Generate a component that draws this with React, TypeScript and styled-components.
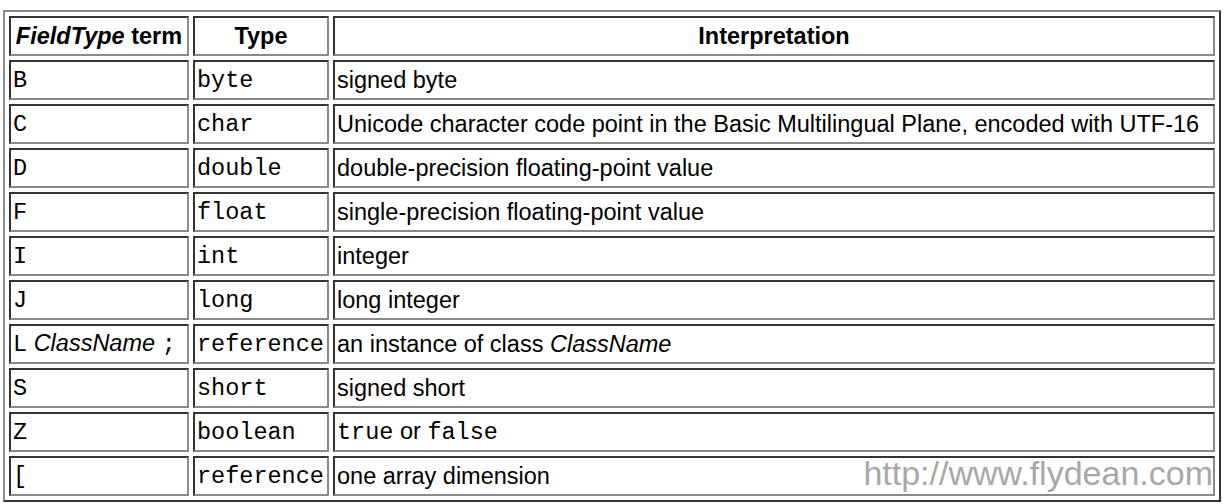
import React from "react";
import styled, { createGlobalStyle } from "styled-components";

const Global = createGlobalStyle`
  html, body { margin: 0; padding: 0; background: #fff; }
  body { font-family: "Liberation Sans", Arial, sans-serif; }
`;

const Page = styled.div`
  padding: 10px 3px 0 3px;
  position: relative;
`;

const Table = styled.table`
  width: 1218px;
  table-layout: fixed;
  border-collapse: separate;
  border-spacing: 4px;
  border-style: solid;
  border-width: 2px;
  border-color: #8a8a8a #333 #333 #8a8a8a;
  font-family: "Liberation Sans", Arial, sans-serif;
  font-size: 23.5px;
  color: #000;
`;

const Th = styled.th<{ $w?: number }>`
  ${(p) => (p.$w ? `width: ${p.$w}px;` : "")}
  height: 40px;
  box-sizing: border-box;
  border-style: solid;
  border-width: 2px;
  border-color: #333 #8a8a8a #8a8a8a #333;
  padding: 0 1px;
  font-size: 23.5px;
  font-weight: bold;
  text-align: center;
  vertical-align: middle;
  white-space: nowrap;
`;

const Td = styled.td`
  height: 40px;
  box-sizing: border-box;
  border-style: solid;
  border-width: 2px;
  border-color: #333 #8a8a8a #8a8a8a #333;
  padding: 0 2px;
  font-size: 23.5px;
  text-align: left;
  vertical-align: middle;
  white-space: nowrap;
`;

const Code = styled.code`
  font-family: "Liberation Mono", "Courier New", monospace;
  font-size: 23.5px;
`;

const Watermark = styled.div`
  position: absolute;
  right: 11px;
  bottom: 12px;
  font-family: "Liberation Sans", Arial, sans-serif;
  font-size: 34px;
  line-height: 1;
  color: #a8a8a8;
  pointer-events: none;
`;

type Row = { term: React.ReactNode; type: string; interp: React.ReactNode };

const rows: Row[] = [
  { term: <Code>B</Code>, type: "byte", interp: "signed byte" },
  {
    term: <Code>C</Code>,
    type: "char",
    interp: "Unicode character code point in the Basic Multilingual Plane, encoded with UTF-16",
  },
  { term: <Code>D</Code>, type: "double", interp: "double-precision floating-point value" },
  { term: <Code>F</Code>, type: "float", interp: "single-precision floating-point value" },
  { term: <Code>I</Code>, type: "int", interp: "integer" },
  { term: <Code>J</Code>, type: "long", interp: "long integer" },
  {
    term: (
      <>
        <Code>L</Code> <i>ClassName</i> <Code>;</Code>
      </>
    ),
    type: "reference",
    interp: (
      <>
        an instance of class <i>ClassName</i>
      </>
    ),
  },
  { term: <Code>S</Code>, type: "short", interp: "signed short" },
  {
    term: <Code>Z</Code>,
    type: "boolean",
    interp: (
      <>
        <Code>true</Code> or <Code>false</Code>
      </>
    ),
  },
  { term: <Code>[</Code>, type: "reference", interp: "one array dimension" },
];

export default function App() {
  return (
    <Page>
      <Global />
      <Table>
        <thead>
          <tr>
            <Th $w={180}>
              <i>FieldType</i> term
            </Th>
            <Th $w={136}>Type</Th>
            <Th>Interpretation</Th>
          </tr>
        </thead>
        <tbody>
          {rows.map((r, i) => (
            <tr key={i}>
              <Td>{r.term}</Td>
              <Td>
                <Code>{r.type}</Code>
              </Td>
              <Td>{r.interp}</Td>
            </tr>
          ))}
        </tbody>
      </Table>
      <Watermark>http://www.flydean.com</Watermark>
    </Page>
  );
}
